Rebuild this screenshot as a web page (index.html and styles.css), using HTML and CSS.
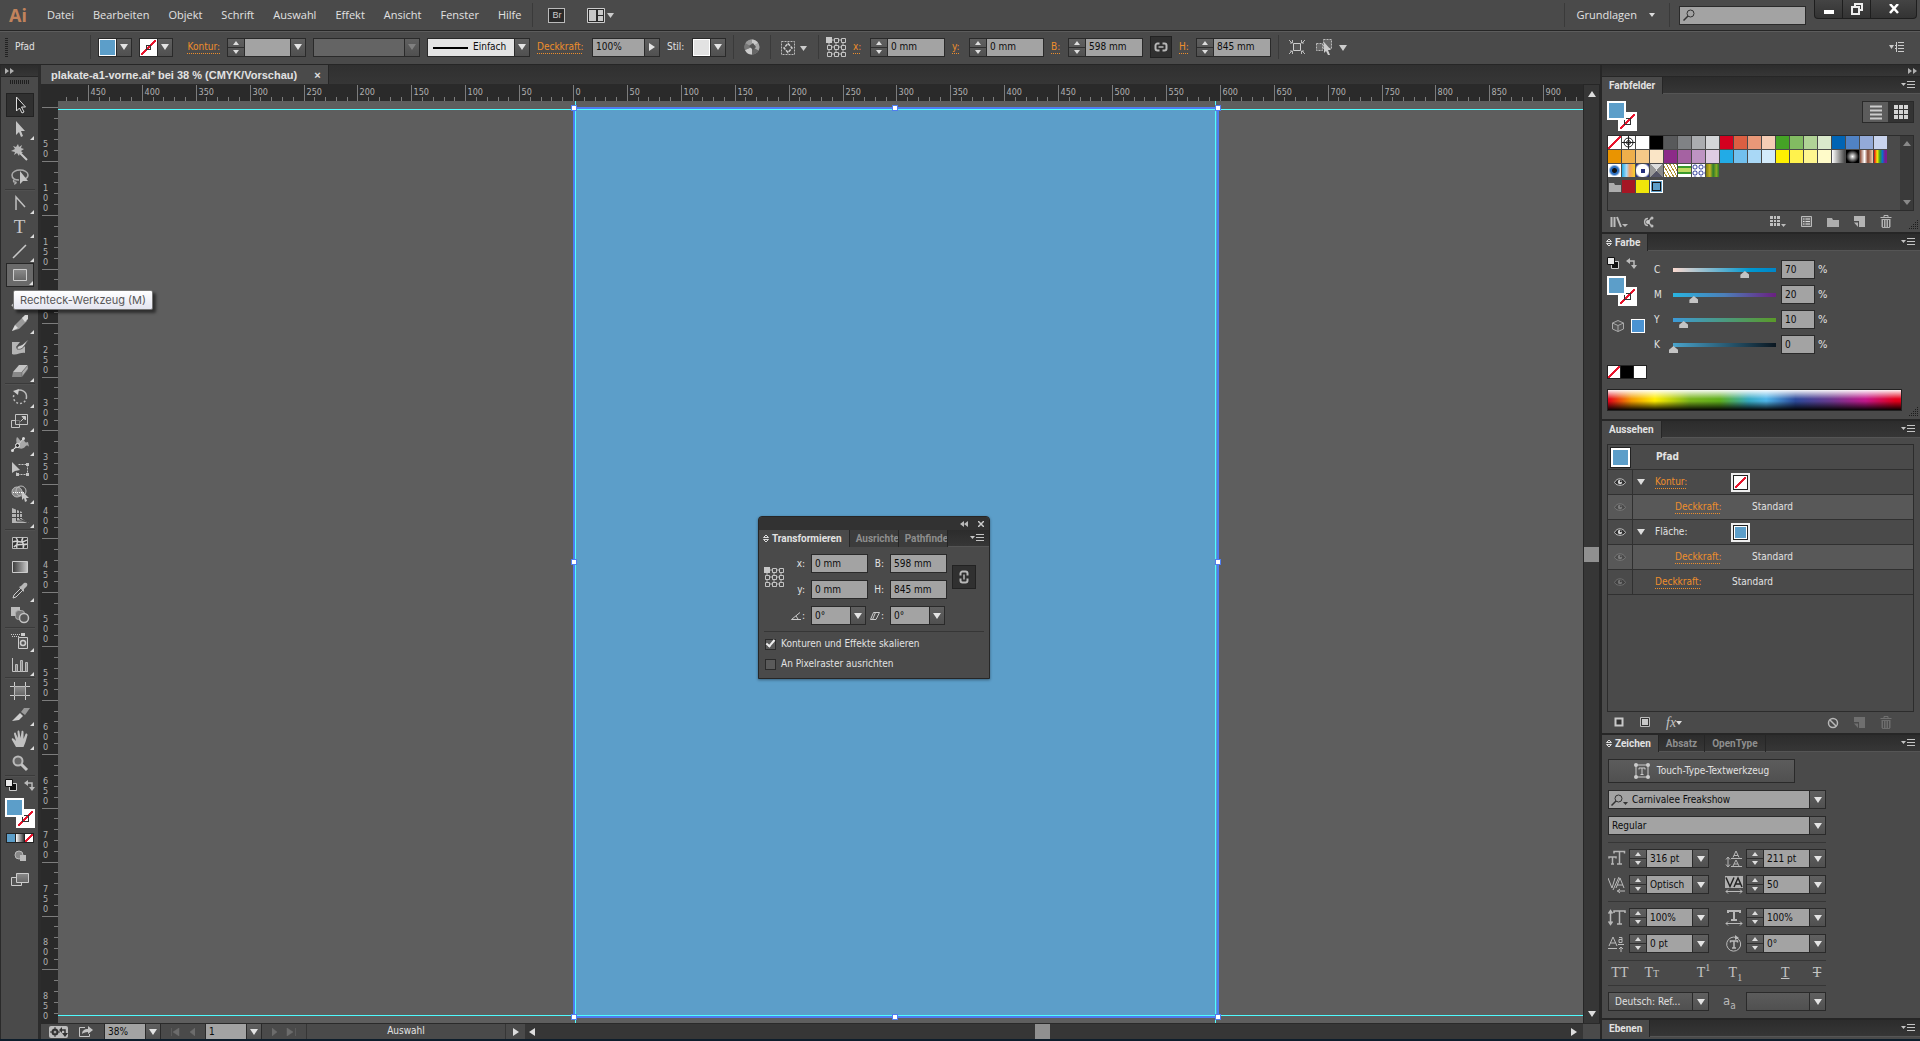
FILE: index.html
```html
<!DOCTYPE html>
<html lang="de">
<head>
<meta charset="utf-8">
<title>plakate-a1-vorne.ai – Illustrator</title>
<link rel="stylesheet" href="styles.css">
</head>
<body>
<svg class="defs" aria-hidden="true">
  <defs>
    <linearGradient id="metal" x1="0" y1="0" x2="0" y2="1"><stop offset="0" stop-color="#d6d6d6"/><stop offset="1" stop-color="#8e8e8e"/></linearGradient>
    <linearGradient id="fade"><stop offset="0" stop-color="#3a3a3a"/><stop offset="1" stop-color="#c8c8c8"/></linearGradient>
    <linearGradient id="dim" x1="0" y1="0" x2="0" y2="1"><stop offset="0" stop-color="#8a8a8a"/><stop offset="1" stop-color="#666"/></linearGradient>
    <symbol id="i-menu" viewBox="0 0 14 10"><path d="M0 3h5l-2.500 3z" fill="#c4c4c4"/><path d="M6 1.500h8M6 4.500h8M6 7.500h8" stroke="#c4c4c4"/></symbol>
    <symbol id="i-ref" viewBox="0 0 20 20"><path d="M3 3h14v14H3zM3 10h14M10 3v14" fill="none" stroke="#bbb"/><g fill="#4a4a4a" stroke="#c4c4c4"><path d="M8.500 1.500h4v4h-4zM15.500 1.500h4v4h-4zM1.500 8.500h4v4h-4zM8.500 8.500h4v4h-4zM15.500 8.500h4v4h-4zM1.500 15.500h4v4h-4zM8.500 15.500h4v4h-4zM15.500 15.500h4v4h-4z"/></g><path d="M0 0h6v6H0z" fill="#c8c8c8"/></symbol>
    <symbol id="i-link" viewBox="0 0 14 10"><path d="M5.500 1.500H3.500a2 2 0 0 0-2 2v3a2 2 0 0 0 2 2h2M8.500 1.500h2a2 2 0 0 1 2 2v3a2 2 0 0 1-2 2h-2" fill="none" stroke="#b8b8b8" stroke-width="2"/><path d="M4.500 5h5" stroke="#b8b8b8" stroke-width="1.500"/></symbol>
    <symbol id="i-eye" viewBox="0 0 12 8"><path d="M.5 4.500C2 1.500 4 .8 6 .8s4 .7 5.500 3.700C10 6.800 8 7.300 6 7.300S2 6.800.5 4.500z" fill="#2c2c2c" stroke="#c0c0c0"/><circle cx="6" cy="4" r="2.200" fill="#d8d8d8"/><circle cx="6.800" cy="3.300" r="1" fill="#222"/></symbol>
    <symbol id="i-default" viewBox="0 0 12 12"><path d="M4.500 4.500h7v7h-7z" fill="#111" stroke="#ccc"/><path d="M.5.5h7v7h-7z" fill="#e8e8e8" stroke="#111"/></symbol>
    <symbol id="i-swap" viewBox="0 0 11 11"><path d="M3 3h5v5" fill="none" stroke="#bbb" stroke-width="1.500"/><path d="M4 0v6L0 3zM5 7h6L8 11z" fill="#bbb"/></symbol>
    <symbol id="i-trash" viewBox="0 0 12 13"><path d="M.5 2.500h11M4 2V.5h4V2" fill="none" stroke="#b8b8b8"/><path d="M1.500 4h9v7.500l-1 1.500h-7l-1-1.500z" fill="#b0b0b0"/><path d="M3.500 5v7M6 5v7M8.500 5v7" stroke="#4a4a4a"/></symbol>
    <symbol id="i-new" viewBox="0 0 11 11"><path d="M0 0h11v11H5V5H0z" fill="#b4b4b4"/><path d="M0 6.500h4V11z" fill="#b4b4b4"/></symbol>
    <symbol id="i-folder" viewBox="0 0 12 10"><path d="M0 1h5l1 2h6v7H0z" fill="#adadad"/></symbol>
    <symbol id="i-grip" viewBox="0 0 10 10"><path d="M8 0h1v1H8zM6 2h1v1H6zM8 2h1v1H8zM4 4h1v1H4zM6 4h1v1H6zM8 4h1v1H8zM2 6h1v1H2zM4 6h1v1H4zM6 6h1v1H6zM8 6h1v1H8zM0 8h1v1H0zM2 8h1v1H2zM4 8h1v1H4zM6 8h1v1H6zM8 8h1v1H8z" fill="#1c1c1c"/></symbol>
    <symbol id="i-loupe" viewBox="0 0 12 12"><circle cx="7.500" cy="4.500" r="3.500" fill="none" stroke="#333"/><path d="M5 7L.5 11.500" stroke="#333" stroke-width="1.500"/></symbol>
    <symbol id="i-updown" viewBox="0 0 6 9"><path d="M.5 3.500L3 1l2.500 2.500zM.5 5.500L3 8l2.500-2.500z" fill="none" stroke="#ddd"/></symbol>
  </defs>
</svg>

<header class="menubar">
  <span class="logo">Ai</span>
  <nav class="menus">
    <a href="#">Datei</a><a href="#">Bearbeiten</a><a href="#">Objekt</a><a href="#">Schrift</a><a href="#">Auswahl</a><a href="#">Effekt</a><a href="#">Ansicht</a><a href="#">Fenster</a><a href="#">Hilfe</a>
  </nav>
  <i class="vsep"></i>
  <button class="bridge">Br</button>
  <button class="plain arrange" aria-label="Dokumente anordnen"><svg width="27" height="15"><path d="M.5.5h17v14H.5z" fill="#2a2a2a" stroke="#ccc"/><path d="M2 2h7v11H2zM11 2h5v5h-5zM11 8h5v5h-5z" fill="#c8c8c8"/><path d="M20 5h7l-3.500 5z" fill="#ccc"/></svg></button>
  <span class="spacer"></span>
  <i class="vsep"></i>
  <button class="plain workspace">Grundlagen <i class="tri small"></i></button>
  <i class="vsep"></i>
  <label class="search"><svg width="12" height="12"><use href="#i-loupe"/></svg><input type="search" aria-label="Suche"></label>
  <div class="winbtns">
    <button aria-label="Minimieren"><svg width="10" height="14"><path d="M0 8h10v4H0z" fill="#fff"/></svg></button><button aria-label="Wiederherstellen"><svg width="12" height="12"><path d="M4 1h7v6H8V4H4zM1 4h7v7H1z" fill="none" stroke="#eee" stroke-width="2"/></svg></button><button class="close" aria-label="Schließen"><svg width="10" height="10"><path d="M1 0l8 9M9 0L1 9" stroke="#fff" stroke-width="2.500"/></svg></button>
  </div>
</header>

<section class="controlbar">
  <i class="grip"></i>
  <span class="kind">Pfad</span>
  <i class="vsep"></i>
  <span class="chip"><i class="sw blue"></i><button class="arrow" aria-label="Fläche"></button></span>
  <span class="chip"><i class="sw none"></i><button class="arrow" aria-label="Konturfarbe"></button></span>
  <label class="hot w40" for="c-stroke">Kontur:</label>
  <span class="field w79"><span class="spin"><button aria-label="mehr"></button><button aria-label="weniger"></button></span><input id="c-stroke"><button class="arrow" aria-label="Konturstärke"></button></span>
  <span class="field disabled w107"><select aria-label="Breitenprofil" disabled></select><button class="arrow" disabled aria-label="Profil"></button></span>
  <span class="field brush w103"><select aria-label="Pinsel"><option>Einfach</option></select><button class="arrow" aria-label="Pinselliste"></button></span>
  <label class="hot w48" for="c-op">Deckkraft:</label>
  <span class="field w68"><input id="c-op" value="100%"><button class="arrow right" aria-label="Deckkraftregler"></button></span>
  <span class="w18">Stil:</span>
  <span class="chip"><i class="sw light"></i><button class="arrow" aria-label="Stil"></button></span>
  <i class="vsep"></i>
  <button class="plain w22" aria-label="Bildmaterial neu färben"><svg width="16" height="16"><circle cx="8" cy="8" r="7.500" fill="#8c8c8c"/><path d="M8 8L8 .5A7.500 7.500 0 0 1 14 4z" fill="#c8c8c8"/><path d="M8 8L14 4a7.500 7.500 0 0 1 .5 7.500z" fill="#a8a8a8"/><path d="M8 8l6.500 3.500A7.500 7.500 0 0 1 8 15.500z" fill="#666"/><path d="M8 8v7.500A7.500 7.500 0 0 1 1 11z" fill="#ccc"/><path d="M8 8L1 11a7.500 7.500 0 0 1 .5-7z" fill="#777"/><path d="M8 8L1.500 4A7.500 7.500 0 0 1 8 .5z" fill="#999"/><path d="M5 7l4-3 3 4-3 3z" fill="#555"/></svg></button>
  <i class="vsep"></i>
  <button class="plain w33" aria-label="Ausrichten"><svg width="27" height="15"><path d="M.5 1.500h13v13H.5z" fill="none" stroke="#bbb" stroke-dasharray="2 1"/><path d="M7 3.500L11 8l-4 4.500L3 8z" fill="none" stroke="#ccc" stroke-width="1.500" stroke-dasharray="3 1"/><path d="M19 6h7l-3.500 5z" fill="#ccc"/></svg></button>
  <i class="vsep"></i>
  <svg width="20" height="20"><use href="#i-ref"/></svg>
  <label class="hot" for="c-x">x:</label>
  <span class="field w75"><span class="spin"><button aria-label="mehr"></button><button aria-label="weniger"></button></span><input id="c-x" value="0 mm"></span>
  <label class="hot" for="c-y">y:</label>
  <span class="field w75"><span class="spin"><button aria-label="mehr"></button><button aria-label="weniger"></button></span><input id="c-y" value="0 mm"></span>
  <label class="hot" for="c-b">B:</label>
  <span class="field w75"><span class="spin"><button aria-label="mehr"></button><button aria-label="weniger"></button></span><input id="c-b" value="598 mm"></span>
  <button class="linkbtn wide" aria-label="Proportionen"><svg width="14" height="10"><use href="#i-link"/></svg></button>
  <label class="hot" for="c-h">H:</label>
  <span class="field w75"><span class="spin"><button aria-label="mehr"></button><button aria-label="weniger"></button></span><input id="c-h" value="845 mm"></span>
  <i class="vsep"></i>
  <button class="plain w22" aria-label="Form"><svg width="16" height="14"><path d="M4.500 3.500h7v7h-7z" fill="#555" stroke="#ccc"/><path d="M0 0l3 3M16 0l-3 3M0 14l3-3M16 14l-3-3M1 3h2.500V0M15 3h-2.500V0M1 11h2.500v3M15 11h-2.500v3" fill="none" stroke="#bbb"/></svg></button>
  <button class="plain w33" aria-label="Isolieren"><svg width="31" height="18"><path d="M.5 5.500h6v7h-6zM7.500 1.500h8v9h-8z" fill="#666" stroke="#bbb" stroke-dasharray="2 1"/><path d="M8 4l7 8h-3l2 5h-2l-2-4-2 2z" fill="#ccc"/><path d="M23 7h8l-4 6z" fill="#ccc"/></svg></button>
  <span class="spacer"></span>
  <button class="plain" aria-label="Menü"><svg width="15" height="12"><path d="M0 4h5l-2.500 4zM6 4h2v1H6zM6 7h2v1H6z" fill="#ccc"/><path d="M9 1.500h6M9 4.500h6M9 7.500h6M9 10.500h6M7.500 1v10" stroke="#ccc"/></svg></button>
</section>

<main class="work">
  <aside class="tools">
    <div class="collapse"><svg width="9" height="6"><path d="M0 0l4 3-4 3zM5 0l4 3-4 3z" fill="#b0b0b0"/></svg></div>
    <div class="toolgrip"><i></i></div>
    <div class="toolset">
      <button class="tool active" aria-label="Auswahl"><svg width="20" height="20"><path d="M6.500 2v14l3-3 2.500 5 2-1-2.500-5h4z" fill="#222" stroke="#ddd"/></svg></button>
      <button class="tool more" aria-label="Direktauswahl"><svg width="20" height="20"><path d="M6 2v14l3-3 2 5 2-1-2-5h4z" fill="#c4c4c4"/></svg></button>
      <button class="tool" aria-label="Zauberstab"><svg width="20" height="20"><path d="M8 1l1 3 3-2-1 3 3 1-3 2 2 2-3 0-1 3-2-3-3 2 1-3-4-1 4-2-2-3 3 1z" fill="#b8b8b8"/><path d="M10 10l7 7" stroke="#c8c8c8" stroke-width="2"/></svg></button>
      <button class="tool" aria-label="Lasso"><svg width="20" height="20"><path d="M9 13c-5 0-7-2-7-5 0-3 4-5 8-5s8 2 8 5c0 2-1 3-3 4M5 12c-2 1-2 3 0 3s1 2-1 2" fill="none" stroke="#aaa" stroke-width="1.500"/><path d="M10 4v13l3-3 5 0z" fill="#c4c4c4"/></svg></button>
      <hr>
      <button class="tool more" aria-label="Ankerpunkt"><svg width="20" height="20"><path d="M6 17V4l9 10" fill="none" stroke="#c0c0c0" stroke-width="1.500"/></svg></button>
      <button class="tool more type" aria-label="Text">T</button>
      <button class="tool more" aria-label="Liniensegment"><svg width="20" height="20"><path d="M3 17L16 4" stroke="#c8c8c8" stroke-width="1.500"/></svg></button>
      <button class="tool more hover" aria-label="Rechteck-Werkzeug"><svg width="20" height="20"><path d="M3.500 4.500h13v11h-13z" fill="url(#dim)" stroke="#ccc"/></svg></button>
      <button class="tool more" aria-label="Pinsel"><svg width="20" height="20"><path d="M2 17l5-5L16 4" stroke="#bbb" stroke-width="2"/></svg></button>
      <button class="tool more" aria-label="Buntstift"><svg width="20" height="20"><path d="M2 18l3-6 8-8 4 4-8 8z" fill="#999"/><path d="M12 5l3-3 3 0 0 4-3 3z" fill="#d8d8d8"/><path d="M2 18l3-6 3 3z" fill="#ddd"/></svg></button>
      <button class="tool" aria-label="Tropfenpinsel"><svg width="20" height="20"><path d="M2 5h8L6 10c3 4 7 1 9-1v7c-4-1-9 3-13 1z" fill="#b4b4b4"/><path d="M7 12c0-4 4-3 6-5l6-5-4 6c-2 3-4 5-8 4z" fill="#d0d0d0" stroke="#444" stroke-width=".7"/></svg></button>
      <button class="tool more" aria-label="Radiergummi"><svg width="20" height="20"><path d="M3 11L9 4h9l-6 7z" fill="#c4c4c4"/><path d="M3 11h9v5H2z" fill="#888"/><path d="M12 11l6-7v4l-6 8z" fill="#aaa" stroke="#555" stroke-width=".5"/></svg></button>
      <hr>
      <button class="tool more" aria-label="Drehen"><svg width="20" height="20"><path d="M6 4.500a6.500 6.500 0 0 1 10.500 5.500" fill="none" stroke="#bbb" stroke-width="1.500"/><path d="M16.500 10a6.500 6.500 0 1 1-12-3.500" fill="none" stroke="#bbb" stroke-width="1.500" stroke-dasharray="2 2"/><path d="M3 4l6-2-1 6z" fill="#ccc"/></svg></button>
      <button class="tool more" aria-label="Skalieren"><svg width="20" height="20"><path d="M1.500 9.500h8v7h-8z" fill="none" stroke="#c4c4c4"/><path d="M5.500 3.500h12v10h-12z" fill="#4a4a4a" fill-opacity=".6" stroke="#c4c4c4"/><path d="M10.500 10.500L14 7M12 5.500h3.500V9z" fill="#ccc" stroke="#ccc"/></svg></button>
      <button class="tool more" aria-label="Breite"><svg width="20" height="20"><path d="M7 10c-1-4-1-6 0-8 2 1 2 3 4 4 1-1 2-2 3-1 1 2 1 3 4 2l1 5c-1-2-3-2-4 0-3 3-6 1-8 1-2 0-3 2-5 2z" fill="#a8a8a8"/><path d="M2.500 15.500l5-5 6-7" stroke="#ddd"/><circle cx="2.500" cy="15.500" r="1.500" fill="#ddd"/><circle cx="7.500" cy="10.500" r="2" fill="#333" stroke="#eee"/><circle cx="13.500" cy="3.500" r="1.500" fill="#ddd"/></svg></button>
      <button class="tool" aria-label="Frei transformieren"><svg width="20" height="20"><path d="M2 3v11l3-2 5-1z" fill="#c4c4c4"/><path d="M8.500 5.500h9v10h-11v-3" fill="none" stroke="#c4c4c4" stroke-dasharray="2 1"/><path d="M16 4h3v3h-3zM16 14h3v3h-3zM6 14h3v3H6z" fill="#c4c4c4"/></svg></button>
      <button class="tool more" aria-label="Formerstellung"><svg width="20" height="20"><circle cx="7" cy="9" r="5" fill="#888" stroke="#bbb"/><circle cx="11" cy="8" r="5" fill="none" stroke="#bbb"/><path d="M3 9.500h11" stroke="#fff" stroke-dasharray="1 1"/><path d="M12 8v9l2-2 1 4 2-1-1-3h3z" fill="#c8c8c8"/></svg></button>
      <button class="tool more" aria-label="Perspektivenraster"><svg width="20" height="20"><path d="M2 1l10 4v7l7 4H2z" fill="#b4b4b4"/><path d="M6.500 2v12H19M9.500 3v9l9 4M2 6.500h10M2 10.500h10" fill="none" stroke="#444"/></svg></button>
      <hr>
      <button class="tool" aria-label="Gitter"><svg width="20" height="20"><path d="M2.500 4.500h15v11h-15z" fill="#333" stroke="#bbb"/><path d="M3 9c4-3 7 3 14-2M4 14c3-5 9-1 13-3M6 5c4 3-1 7 1 10M13 5c-4 4 3 5 0 10" fill="none" stroke="#d4d4d4" stroke-width="1.500"/></svg></button>
      <button class="tool" aria-label="Verlauf"><svg width="20" height="20"><path d="M2.500 4.500h15v11h-15z" fill="url(#fade)" stroke="#ccc"/></svg></button>
      <button class="tool more" aria-label="Pipette"><svg width="20" height="20"><path d="M3 17l1-3 7-7 2 2-7 7z" fill="#444" stroke="#ccc"/><path d="M9 6l2-1 3-3c3-1 4 1 3 3l-3 3 0 3z" fill="#b8b8b8"/></svg></button>
      <button class="tool" aria-label="Angleichen"><svg width="20" height="20"><path d="M1 2h9v9H1z" fill="#bbb"/><rect x="5.500" y="5.500" width="9" height="9" rx="3" fill="#777" stroke="#aaa"/><circle cx="14" cy="13" r="4.500" fill="#555" stroke="#c4c4c4" stroke-width="1.500"/></svg></button>
      <hr>
      <button class="tool more" aria-label="Symbol aufsprühen"><svg width="20" height="20"><path d="M1 3.500h9M2 5.500h8" stroke="#ccc" stroke-dasharray="1 1"/><path d="M11 2h4v3h-4z" fill="#ccc"/><path d="M8.500 6.500h9v11h-9z" fill="#555" stroke="#ccc"/><circle cx="13" cy="12" r="2.500" fill="none" stroke="#ccc" stroke-width="1.500"/></svg></button>
      <button class="tool more" aria-label="Diagramm"><svg width="20" height="20"><path d="M2.500 3v13.500H18" fill="none" stroke="#c4c4c4"/><path d="M5.500 9.500h2v7h-2zM10.500 5.500h2v11h-2zM15.500 7.500h2v9h-2z" fill="#888" stroke="#bbb"/></svg></button>
      <hr>
      <button class="tool" aria-label="Zeichenfläche"><svg width="20" height="20"><path d="M4.500 5.500h11v9h-11z" fill="url(#dim)" stroke="#bbb"/><path d="M4.500 1v4M15.500 1v4M4.500 15v4M15.500 15v4M0 5.500h4M16 5.500h4M0 14.500h4M16 14.500h4" stroke="#ccc"/></svg></button>
      <button class="tool more" aria-label="Slice"><svg width="20" height="20"><path d="M2 16l8-8 3 3-4 4z" fill="#d0d0d0"/><path d="M11 7l3-4h6l-5 7z" fill="#999"/></svg></button>
      <button class="tool more" aria-label="Hand"><svg width="20" height="20"><path d="M6 18l-4-7c-1-2 1-2 2-1l2 2-2-7c0-2 2-2 2 0l2 4-.5-6c0-2 2-2 2 0l1 6 1-6c0-2 2-1 2 0l0 7 2-5c1-1 2 0 2 1l-2 7-2 5z" fill="#c0c0c0"/></svg></button>
      <button class="tool" aria-label="Zoom"><svg width="20" height="20"><circle cx="8" cy="8" r="4.500" fill="#666" stroke="#b8b8b8" stroke-width="2"/><path d="M11.500 11.500L17 17" stroke="#c4c4c4" stroke-width="3"/></svg></button>
      <hr>
    </div>
    <div class="minirow"><svg width="12" height="12"><use href="#i-default"/></svg><svg width="11" height="11"><use href="#i-swap"/></svg></div>
    <div class="fillstroke"><i class="sw none big"></i><i class="sw blue big"></i></div>
    <div class="modes"><i class="blue"></i><i class="grad"></i><i class="none"></i></div>
    <div class="tool"><svg width="20" height="20"><circle cx="9" cy="9" r="4" fill="#888" stroke="#bbb"/><path d="M10 9h6v6h-6z" fill="#bbb"/></svg></div>
    <div class="tool"><svg width="20" height="20"><path d="M1.500 7.500h10v8h-10z" fill="#555" stroke="#ccc"/><path d="M6.500 3.500h12v9h-12z" fill="url(#dim)" stroke="#ccc"/></svg></div>
  </aside>

  <section class="doc">
    <div class="doctabs"><div class="doctab"><span>plakate-a1-vorne.ai* bei 38 % (CMYK/Vorschau)</span><button class="plain" aria-label="Schließen">×</button></div></div>
    <div class="stage">
      <svg class="rule-x" id="rule-x" aria-hidden="true"></svg>
      <svg class="rule-y" id="rule-y" aria-hidden="true"></svg>
      <div class="canvas">
        <div class="artboard">
          <i class="h tl"></i><i class="h tc"></i><i class="h tr"></i><i class="h ml"></i><i class="h mr"></i><i class="h bl"></i><i class="h bc"></i><i class="h br"></i>
        </div>
        <i class="guide gx1"></i><i class="guide gx2"></i><i class="guide gy1"></i><i class="guide gy2"></i>
        <section class="transform">
          <div class="thead"><svg width="8" height="6"><path d="M4 0L0 3l4 3zM8 0L4 3l4 3z" fill="#bbb"/></svg><svg width="6" height="6"><path d="M0 0l6 6M6 0L0 6" stroke="#ccc" stroke-width="1.500"/></svg></div>
          <div class="tabs"><button class="tab on"><svg width="6" height="9"><use href="#i-updown"/></svg>Transformieren</button><button class="tab clip">Ausrichten</button><button class="tab clip">Pathfinder</button><span class="spacer"></span><svg width="14" height="10"><use href="#i-menu"/></svg></div>
          <div class="tbody">
            <div class="tgrid">
              <svg class="tref" width="20" height="20"><use href="#i-ref"/></svg>
              <label for="t-x">x:</label><span class="field"><input id="t-x" value="0 mm"></span>
              <label for="t-b">B:</label><span class="field"><input id="t-b" value="598 mm"></span>
              <label for="t-y">y:</label><span class="field"><input id="t-y" value="0 mm"></span>
              <label for="t-h">H:</label><span class="field"><input id="t-h" value="845 mm"></span>
              <label class="rot" for="t-w" aria-label="Drehen"><svg width="10" height="8"><path d="M9 .5L.5 7.500H10M5 4l2 3" fill="none" stroke="#ccc"/></svg>:</label><span class="field angle"><input id="t-w" value="0°"><button class="arrow" aria-label="Winkel"></button></span>
              <label for="t-s" aria-label="Verbiegen"><svg width="10" height="8"><path d="M3.500.5h6L6 7.500H.5zM5.500.5L2.500 7.500" fill="none" stroke="#ccc"/></svg>:</label><span class="field angle"><input id="t-s" value="0°"><button class="arrow" aria-label="Winkel"></button></span>
              <button class="linkbtn tlink" aria-label="Proportionen"><svg width="10" height="14"><path d="M1.500 5.500V3.500a2 2 0 0 1 2-2h3a2 2 0 0 1 2 2v2M1.500 8.500v2a2 2 0 0 0 2 2h3a2 2 0 0 0 2-2v-2" fill="none" stroke="#b8b8b8" stroke-width="2"/><path d="M5 4.500v5" stroke="#b8b8b8" stroke-width="1.500"/></svg></button>
            </div>
            <hr>
            <label class="check"><input type="checkbox" checked>Konturen und Effekte skalieren</label>
            <label class="check"><input type="checkbox">An Pixelraster ausrichten</label>
          </div>
        </section>
      </div>
      <div class="vscroll"><i class="up"></i><i class="thumb"></i><i class="down"></i></div>
    </div>
    <footer class="status">
      <button class="plain" aria-label="Voreinstellungen"><svg width="19" height="12"><rect width="19" height="12" rx="2" fill="#bdbdbd"/><circle cx="6" cy="6" r="2.500" fill="none" stroke="#333" stroke-width="2" /><path d="M6 1v10M1 6h10" stroke="#333"/><circle cx="6" cy="6" r="1" fill="#bdbdbd"/><path d="M12 4h4v4" fill="none" stroke="#333" stroke-width="1.500"/><path d="M13 1v6l-3-3zM13 7h6l-3 4z" fill="#333"/></svg></button>
      <button class="plain" aria-label="Teilen"><svg width="14" height="12"><path d="M6 1.500H.5v9h10V8" fill="none" stroke="#c4c4c4"/><path d="M3 8c0-3 2-5 6-5V0l5 4-5 4V6C6 6 4 7 3 8z" fill="#c4c4c4"/></svg></button>
      <span class="field w57"><input aria-label="Zoom" value="38%"><button class="arrow" aria-label="Zoomliste"></button></span>
      <span class="nav"><svg width="24" height="8"><path d="M.5 0v8M8 0v8L2 4zM24 0v8l-5-4z" fill="#6c6c6c" stroke="#6c6c6c" stroke-width=".5"/></svg></span>
      <span class="field w57"><input aria-label="Zeichenfläche" value="1"><button class="arrow" aria-label="Zeichenflächen"></button></span>
      <span class="nav"><svg width="24" height="8"><path d="M0 0v8l5-4zM15 0v8l6-4zM23.500 0v8" fill="#6c6c6c" stroke="#6c6c6c" stroke-width=".5"/></svg></span>
      <span class="tooltext">Auswahl</span>
      <button class="plain go" aria-label="Anzeige"><i class="triR"></i></button>
      <div class="hscroll"><i class="left"></i><span class="before"></span><i class="thumb"></i><span class="after"></span><i class="rightEnd"></i></div>
      <i class="corner"></i>
    </footer>
  </section>

  <aside class="dock">
    <div class="collapse end"><svg width="9" height="6"><path d="M0 0l4 3-4 3zM5 0l4 3-4 3z" fill="#b0b0b0"/></svg></div>

    <section class="panel">
      <div class="tabs"><button class="tab on">Farbfelder</button><span class="spacer"></span><svg width="14" height="10"><use href="#i-menu"/></svg></div>
      <div class="swbody">
        <div class="swtop">
          <div class="fillstroke"><i class="sw none big"></i><i class="sw blue big"></i></div>
          <div class="views"><button aria-label="Liste"><svg width="12" height="15"><path d="M0 1.500h12M0 5.500h12M0 9.500h12M0 13.500h12" stroke="#ccc" stroke-width="2"/></svg></button><button class="sel" aria-label="Raster"><svg width="14" height="14"><path d="M0 0h4v4H0zM5 0h4v4H5zM10 0h4v4h-4zM0 5h4v4H0zM5 5h4v4H5zM10 5h4v4h-4zM0 10h4v4H0zM5 10h4v4H5zM10 10h4v4h-4z" fill="#d4d4d4"/></svg></button></div>
        </div>
        <div class="swlist"><div class="swscroll"><div class="swgrid" id="swatches"></div>
          <div class="swgrid group"><i class="cell fold"><svg width="12" height="10"><use href="#i-folder"/></svg></i><i class="cell" style="background:#a51624"></i><i class="cell" style="background:#f0e60a"></i><i class="cell chosen"></i></div></div>
          <div class="mini-scroll"><i></i><i class="dn"></i></div>
        </div>
        <div class="foot">
          <button class="plain" aria-label="Bibliothek"><svg width="18" height="12"><path d="M1.500 1v10M4.500 1v10M7 1l4 10" stroke="#bbb" stroke-width="2"/><path d="M12 8h6l-3 3z" fill="#bbb"/></svg></button>
          <button class="plain" aria-label="Kuler"><svg width="11" height="12"><path d="M9 1.500L5 6l4 4.500M5 2.500C.5 2.500.5 9.500 5 9.500" fill="none" stroke="#bbb" stroke-width="1.500"/><circle cx="9" cy="2" r="1.500" fill="#bbb"/><circle cx="9" cy="10" r="1.500" fill="#bbb"/><circle cx="5" cy="6" r="2" fill="#ccc"/></svg></button>
          <span class="spacer"></span>
          <button class="plain" aria-label="Art"><svg width="16" height="12"><path d="M0 0h10v10H0z" fill="#c0c0c0"/><path d="M0 3.500h10M0 6.500h10M3.500 0v10M6.500 0v10" stroke="#4a4a4a"/><path d="M11 8h5l-2.500 3z" fill="#bbb"/></svg></button>
          <button class="plain" aria-label="Optionen"><svg width="11" height="11"><path d="M.5.5h10v10H.5z" fill="#666" stroke="#bbb"/><path d="M2 3h1.500M2 5.500h1.500M2 8h1.500M4.500 3H9M4.500 5.500H9M4.500 8H9" stroke="#ddd"/></svg></button>
          <button class="plain" aria-label="Gruppe"><svg width="12" height="10"><use href="#i-folder"/></svg></button>
          <button class="plain" aria-label="Neu"><svg width="11" height="11"><use href="#i-new"/></svg></button>
          <button class="plain" aria-label="Löschen"><svg width="12" height="13"><use href="#i-trash"/></svg></button>
          <span class="footend"></span>
        </div>
        <svg class="pgrip" width="10" height="10"><use href="#i-grip"/></svg>
      </div>
    </section>

    <section class="panel">
      <div class="tabs"><button class="tab on"><svg width="6" height="9"><use href="#i-updown"/></svg>Farbe</button><span class="spacer"></span><svg width="14" height="10"><use href="#i-menu"/></svg></div>
      <div class="colbody">
        <div class="colgrid">
          <div class="colleft">
            <div class="minirow"><svg width="12" height="12"><use href="#i-default"/></svg><svg width="11" height="11"><use href="#i-swap"/></svg></div>
            <div class="fillstroke"><i class="sw none big"></i><i class="sw blue big"></i></div>
            <div class="minirow cube"><svg width="12" height="12"><path d="M6 .5L11.500 3v6L6 11.500.5 9V3zM.5 3L6 5.500 11.500 3M6 5.500v6" fill="#555" stroke="#aaa"/></svg><i class="gamut"></i></div>
          </div>
          <div class="sliders" id="sliders"></div>
        </div>
        <div class="three"><i class="none"></i><i class="blk"></i><i class="wht"></i></div>
        <div class="spectrum"></div>
        <svg class="pgrip" width="10" height="10"><use href="#i-grip"/></svg>
      </div>
    </section>

    <section class="panel">
      <div class="tabs"><button class="tab on">Aussehen</button><span class="spacer"></span><svg width="14" height="10"><use href="#i-menu"/></svg></div>
      <div class="apbody">
        <div class="aplist">
          <div class="aprow head"><i class="sw blue mid"></i><b>Pfad</b></div>
          <div class="aprow"><span class="eye"><svg width="12" height="8"><use href="#i-eye"/></svg></span><i class="tri"></i><a class="hot c1" href="#">Kontur:</a><i class="sw none framed"></i></div>
          <div class="aprow sub"><span class="eye dim"><svg width="12" height="8"><use href="#i-eye"/></svg></span><a class="hot c2" href="#">Deckkraft:</a><span>Standard</span></div>
          <div class="aprow"><span class="eye"><svg width="12" height="8"><use href="#i-eye"/></svg></span><i class="tri"></i><span class="c1">Fläche:</span><i class="sw blue framed"></i></div>
          <div class="aprow sub"><span class="eye dim"><svg width="12" height="8"><use href="#i-eye"/></svg></span><a class="hot c2" href="#">Deckkraft:</a><span>Standard</span></div>
          <div class="aprow"><span class="eye dim"><svg width="12" height="8"><use href="#i-eye"/></svg></span><a class="hot c3" href="#">Deckkraft:</a><span>Standard</span></div>
        </div>
        <div class="foot">
          <button class="plain" aria-label="Neue Kontur"><svg width="11" height="11"><path d="M1.500 1.500h7v7h-7z" fill="#333" stroke="#c8c8c8" stroke-width="2"/></svg></button>
          <button class="plain" aria-label="Neue Fläche"><svg width="11" height="11"><path d="M.5.5h9v9h-9z" fill="#333" stroke="#bbb"/><path d="M2 2h6v6H2z" fill="#c8c8c8"/></svg></button>
          <button class="plain fx">fx<i class="tri small"></i></button>
          <span class="spacer"></span>
          <button class="plain" aria-label="Löschen"><svg width="12" height="12"><circle cx="6" cy="6" r="4.500" fill="none" stroke="#b8b8b8" stroke-width="1.500"/><path d="M3 3l6 6" stroke="#b8b8b8" stroke-width="1.500"/></svg></button>
          <button class="plain dim" aria-label="Neu"><svg width="11" height="11"><use href="#i-new"/></svg></button>
          <button class="plain dim" aria-label="Entfernen"><svg width="12" height="13"><use href="#i-trash"/></svg></button>
          <span class="footend"></span>
        </div>
      </div>
    </section>

    <section class="panel">
      <div class="tabs"><button class="tab on"><svg width="6" height="9"><use href="#i-updown"/></svg>Zeichen</button><button class="tab">Absatz</button><button class="tab">OpenType</button><span class="spacer"></span><svg width="14" height="10"><use href="#i-menu"/></svg></div>
      <div class="chbody">
        <button class="touch"><svg width="16" height="16"><path d="M2 2h12v12H2z" fill="none" stroke="#ccc"/><g fill="#ccc"><circle cx="2" cy="2" r="2"/><circle cx="14" cy="2" r="2"/><circle cx="2" cy="14" r="2"/><circle cx="14" cy="14" r="2"/></g><path d="M5 6.500V5h6v1.500M8 5v6M6.500 11.500h3" fill="none" stroke="#ccc"/></svg>Touch-Type-Textwerkzeug</button>
        <span class="field font"><svg width="18" height="12"><use href="#i-loupe" width="12" height="12"/><path d="M12 8h5l-2.500 3z" fill="#333"/></svg><select aria-label="Schriftfamilie"><option>Carnivalee Freakshow</option></select><button class="arrow" aria-label="Schriften"></button></span>
        <span class="field"><select aria-label="Schriftschnitt"><option>Regular</option></select><button class="arrow" aria-label="Schnitte"></button></span>
        <hr>
        <div class="chrow">
          <svg width="18" height="18"><path d="M6 3.500V1.500h10.500v2M11.500 1.500v12M9 14h5M1 8.500V7h7v1.500M4.500 7v7M3 14h3" fill="none" stroke="#b4b4b4" stroke-width="1.500"/></svg>
          <span class="field"><span class="spin"><button aria-label="mehr"></button><button aria-label="weniger"></button></span><input aria-label="Schriftgrad" value="316 pt"><button class="arrow" aria-label="Grade"></button></span>
          <svg width="18" height="18"><path d="M8 7.500l3-6.500 3 6.500M9 5.500h4M8 16l3-6 3 6M9 14h4M6 8.500h11M6 16.500h11M3 8v8M1 9.500L3 7l2 2.500M1 14.500L3 17l2-2.500" fill="none" stroke="#b8b8b8"/></svg>
          <span class="field"><span class="spin"><button aria-label="mehr"></button><button aria-label="weniger"></button></span><input aria-label="Zeilenabstand" value="211 pt"><button class="arrow" aria-label="Abstände"></button></span>
        </div>
        <div class="chrow">
          <svg width="18" height="18"><path d="M0 2l4 10L7 2M8 12l4-10 4 10M9 9h6M5 14L11 1M9 15h8M12 13l-2.500 2 2.500 2" fill="none" stroke="#bbb"/></svg>
          <span class="field"><span class="spin"><button aria-label="mehr"></button><button aria-label="weniger"></button></span><input aria-label="Kerning" value="Optisch"><button class="arrow" aria-label="Kerning"></button></span>
          <svg width="18" height="18"><path d="M0 0h18v12H0z" fill="#b0b0b0"/><path d="M1 1.500l4 9 4-9M9 11l4-9 4 9M10.500 8h5" fill="none" stroke="#222" stroke-width="1.500"/><path d="M1 15.500h16M3 13.500l-2 2 2 2M15 13.500l2 2-2 2" fill="none" stroke="#bbb"/></svg>
          <span class="field"><span class="spin"><button aria-label="mehr"></button><button aria-label="weniger"></button></span><input aria-label="Laufweite" value="50"><button class="arrow" aria-label="Laufweiten"></button></span>
        </div>
        <hr>
        <div class="chrow">
          <svg width="18" height="18"><path d="M6 4V2h11v2M11.500 2v13M9 15h5M2.500 2v13M.5 4.500l2-3 2 3M.5 12.500l2 3 2-3" fill="none" stroke="#b8b8b8" stroke-width="1.500"/></svg>
          <span class="field"><span class="spin"><button aria-label="mehr"></button><button aria-label="weniger"></button></span><input aria-label="Vertikal skalieren" value="100%"><button class="arrow" aria-label="Werte"></button></span>
          <svg width="18" height="18"><path d="M3 4V2h12v2M9 2v9M6 11h6" fill="none" stroke="#b8b8b8" stroke-width="2"/><path d="M1 14.500h16M3 12.500l-2 2 2 2M15 12.500l2 2-2 2" fill="none" stroke="#bbb"/></svg>
          <span class="field"><span class="spin"><button aria-label="mehr"></button><button aria-label="weniger"></button></span><input aria-label="Horizontal skalieren" value="100%"><button class="arrow" aria-label="Werte"></button></span>
        </div>
        <div class="chrow">
          <svg width="18" height="18"><path d="M1 11L5 2l4 9M2.500 8h5M0 13.500h9M11 2.500h3v5h-3v-3h3M10 9.500h6M13 17v-5M11 14l2-2 2 2" fill="none" stroke="#bbb"/></svg>
          <span class="field"><span class="spin"><button aria-label="mehr"></button><button aria-label="weniger"></button></span><input aria-label="Grundlinienversatz" value="0 pt"><button class="arrow" aria-label="Werte"></button></span>
          <svg width="18" height="18"><path d="M12 3a7 7 0 1 1-6-.3" fill="none" stroke="#bbb"/><path d="M6 2.700a7 7 0 0 1 5-.3" fill="none" stroke="#bbb"/><path d="M10 0l4 3-4 2z" fill="#bbb"/><path d="M5.500 7.500V6h7v1.500M9 6v7M7 13h4" fill="none" stroke="#bbb" stroke-width="1.500"/></svg>
          <span class="field"><span class="spin"><button aria-label="mehr"></button><button aria-label="weniger"></button></span><input aria-label="Zeichendrehung" value="0°"><button class="arrow" aria-label="Werte"></button></span>
        </div>
        <hr>
        <div class="styles"><button>TT</button><button>T<small>T</small></button><button>T<sup>1</sup></button><button>T<sub>1</sub></button><button class="u">T</button><button class="s">T</button></div>
        <hr>
        <div class="chlast"><span class="field dark"><select aria-label="Sprache"><option>Deutsch: Ref...</option></select><button class="arrow" aria-label="Sprachen"></button></span><span class="aa">a<sub>a</sub></span><span class="field dark"><select aria-label="Glätten"></select><button class="arrow" aria-label="Glättung"></button></span></div>
      </div>
    </section>

    <section class="panel last">
      <div class="tabs"><button class="tab on">Ebenen</button><span class="spacer"></span><svg width="14" height="10"><use href="#i-menu"/></svg></div>
    </section>
  </aside>
</main>
<div class="tooltip" role="tooltip">Rechteck-Werkzeug (M)</div>
<script src="app.js"></script>
</body>
</html>
```
FILE: styles.css
```css
* { box-sizing: border-box; }
html, body { height: 100%; }
body { margin: 0; display: flex; flex-direction: column; background: #4a4a4a; color: #e2e2e2; font: 10px/14px "DejaVu Sans Condensed", "Liberation Sans", sans-serif; overflow: hidden; border-bottom: 2px solid #0d1d2b; }
button, input, select { font: inherit; color: inherit; margin: 0; padding: 0; border: 0; background: none; border-radius: 0; outline: 0; }
svg { flex: none; display: block; }
hr { border: 0; margin: 0; height: 1px; background: #363636; }
i { display: block; flex: none; }
a { color: inherit; text-decoration: none; }
.defs { position: absolute; width: 0; height: 0; }
.spacer { flex: 1; }
.plain { display: flex; align-items: center; justify-content: center; }
.vsep { width: 1px; height: 24px; background: #3a3a3a; }
.tri { border: 4px solid transparent; border-top: 6px solid #ddd; border-bottom: 0; width: 0; }
.tri.small { border-width: 4px 3px 0; }

/* menu bar */
.menubar { flex: none; height: 31px; display: flex; align-items: center; border-bottom: 1px solid #262626; font: 11px/16px "Open Sans", "Noto Sans", sans-serif; }
.logo { width: 47px; padding-left: 9px; color: #c1835c; font: bold 18px/24px "Noto Sans", sans-serif; }
.menus { display: flex; gap: 19px; margin-right: 11px; }
.bridge { width: 17px; height: 15px; margin-left: 15px; border: 1px solid #bbb; background: #2a2a2a; color: #ccc; font: 9px/12px "Liberation Sans", sans-serif; }
.arrange { margin-left: 22px; }
.workspace { gap: 12px; padding: 0 14px 0 12px; }
.search { display: flex; align-items: center; width: 127px; height: 19px; margin-left: 9px; padding-left: 3px; background: #a3a3a3; border: 1px solid #2a2a2a; }
.search input { width: 100%; min-width: 0; color: #111; }
.winbtns { display: flex; align-self: flex-start; margin: 0 3px 0 8px; border: 1px solid #1e1e1e; border-top: 0; border-radius: 0 0 4px 4px; background: linear-gradient(#444, #333); }
.winbtns button { width: 28px; height: 18px; display: grid; place-items: center; border-right: 1px solid #1e1e1e; }
.winbtns .close { width: 45px; height: 18px; border: 0; }

/* control bar */
.controlbar { flex: none; height: 34px; display: flex; align-items: center; gap: 7px; padding: 0 16px 2px 5px; border-top: 1px solid #5c5c5c; border-bottom: 1px solid #262626; }
.grip { width: 3px; height: 19px; background: repeating-linear-gradient(#222 0 1px, #4a4a4a 1px 2px); }
.kind { width: 68px; }
.w18 { width: 18px; } .w22 { width: 22px; } .w33 { width: 33px; } .w40 { width: 40px; } .w48 { width: 48px; white-space: nowrap; }
.w57 { width: 57px; } .w68 { width: 68px; } .w75 { width: 75px; } .w79 { width: 79px; } .w103 { width: 103px; } .w107 { width: 107px; }
.controlbar > * { flex: none; }
.controlbar > .spacer { flex: 1; }
.hot { color: #ee8e2c; text-decoration: underline dotted; text-underline-offset: 3px; min-width: 10px; white-space: nowrap; }
.w40.hot { text-align: right; }
.chip { display: flex; width: 34px; height: 19px; border: 1px solid #2a2a2a; }
.sw { position: relative; border: 1px solid #fff; }
.chip .sw { flex: 1; }
.blue { background: #5c9ec9; }
.light { background: #e2e2e2; }
.none { background: linear-gradient(to bottom right, transparent calc(50% - 1px), #e8142c calc(50% - 1px) calc(50% + 1px), transparent calc(50% + 1px)), #fff; }
.arrow { flex: none; width: 15px; border-left: 1px solid #2a2a2a; background: linear-gradient(#606060, #505050); display: grid; place-items: center; }
.arrow::before { content: ""; border: 4px solid transparent; border-top: 6px solid #e4e4e4; border-bottom: 0; }
.arrow.right::before { border: 4px solid transparent; border-left: 6px solid #e4e4e4; border-right: 0; }
.arrow:disabled::before { border-top-color: #808080; }
.field { display: flex; height: 19px; border: 1px solid #2a2a2a; background: #a3a3a3; color: #0c0c0c; min-width: 0; }
.field input, .field select { flex: 1; width: 0; min-width: 0; padding-left: 3px; appearance: none; }
.field select:disabled { opacity: 1; }
.disabled { background: #646464; }
.brush { background: #e4e4e4; }
.brush select { padding-left: 45px; background: linear-gradient(#000, #000) 5px 8px / 35px 2px no-repeat; }
.dark { background: linear-gradient(#5c5c5c, #505050); color: #e2e2e2; }
.spin { flex: none; width: 17px; display: flex; flex-direction: column; border-right: 1px solid #2a2a2a; background: linear-gradient(#606060, #505050); }
.spin button { flex: 1; display: grid; place-items: center; }
.spin button + button { border-top: 1px solid #2f2f2f; }
.spin button::before { content: ""; border: 3px solid transparent; border-top: 0; border-bottom: 4px solid #ddd; }
.spin button + button::before { border-bottom: 0; border-top: 4px solid #ddd; }
.linkbtn { display: grid; place-items: center; width: 24px; height: 24px; background: #303030; border: 1px solid #222; }
.linkbtn.wide { width: 22px; height: 22px; }

/* work area */
.work { flex: 1; min-height: 0; display: grid; grid-template-columns: 41px minmax(0, 1fr) 320px; }
.collapse { flex: none; height: 12px; background: linear-gradient(#2c2c2c, #363636); padding: 3px 4px; border-bottom: 1px solid #262626; }
.collapse.end { display: flex; justify-content: flex-end; padding-right: 3px; }

.tools { border-left: 1px solid #2a2a2a; border-right: 3px solid #2c2c2c; display: flex; flex-direction: column; align-items: center; }
.tools .collapse { align-self: stretch; }
.toolgrip { height: 16px; padding-top: 3px; }
.toolgrip i { width: 20px; height: 4px; background: repeating-linear-gradient(90deg, #1e1e1e 0 1px, #4a4a4a 1px 2px); }
.toolset { width: 30px; }
.toolset hr { height: 2px; background: #3a3a3a; border-bottom: 1px solid #505050; }
.tool { position: relative; width: 28px; height: 24px; margin: 0 1px; display: grid; place-items: center; }
.tool.active { background: #303030; border: 1px solid #222; }
.tool.hover { background: #6a6a6a; border: 1px solid #262626; }
.tool.more::after { content: ""; position: absolute; right: 0; bottom: 1px; border: 2px solid #ddd; border-top-color: transparent; border-left-color: transparent; }
.tool.type { font: 19px/22px "Liberation Serif", serif; color: #c8c8c8; }
.minirow { display: flex; align-items: center; justify-content: space-between; width: 30px; height: 12px; }
.tools .minirow { margin-top: 2px; }
.fillstroke { position: relative; width: 30px; height: 30px; }
.sw.big { position: absolute; width: 19px; height: 19px; left: 0; top: 0; border: 2px solid #fff; }
.sw.none.big { left: 11px; top: 11px; }
.sw.none.big::after { content: ""; position: absolute; inset: 4px; border: 1px solid #333; }
.chip .sw.none::after { content: ""; position: absolute; inset: 5px; border: 1px solid #333; }
.tools .fillstroke { margin: 7px 0 5px; }
.modes { display: flex; border: 1px solid #222; gap: 1px; background: #222; margin-bottom: 1px; }
.modes i { width: 8px; height: 8px; }
.grad { background: linear-gradient(90deg, #fff, #333); }

.doc { display: flex; flex-direction: column; min-width: 0; }
.doctabs { flex: none; height: 19px; background: linear-gradient(#303030, #363636); display: flex; }
.doctab { display: flex; align-items: center; gap: 17px; width: 288px; padding-left: 10px; background: #4a4a4a; border-right: 1px solid #262626; font: bold 11px/16px "Liberation Sans", sans-serif; white-space: nowrap; }
.stage { flex: 1; min-height: 0; display: grid; grid-template: 17px minmax(0, 1fr) / 17px minmax(0, 1fr) 17px; }
.rule-x { grid-area: 1 / 1 / 2 / 3; width: 100%; height: 17px; background: #2a2a2a; }
.rule-y { grid-area: 2 / 1 / 3 / 2; width: 17px; height: 100%; background: #2a2a2a; }
.rule-x text, .rule-y text { font: 9px "DejaVu Sans Condensed", sans-serif; fill: #b0b0b0; }
.rule-x path, .rule-y path { stroke: #7c7c7c; }
.canvas { position: relative; overflow: hidden; background: #5e5e5e; }
.artboard { position: absolute; left: 515px; top: 6px; width: 646px; height: 911px; background: #5c9ec9; border: 2px solid #4f7df0; }
.h { position: absolute; width: 6px; height: 6px; background: #fff; border: 1px solid #4f7df0; margin: -4px; z-index: 2; }
.tl, .ml, .bl { left: 0; } .tr, .mr, .br { right: 0; } .tl, .tc, .tr { top: 0; } .bl, .bc, .br { bottom: 0; } .tc, .bc { left: 50%; } .ml, .mr { top: 50%; }
.guide { position: absolute; background: #4ffcff; }
.gx1, .gx2 { width: 1px; top: 0; bottom: 0; }
.gx1 { left: 517px; } .gx2 { left: 1157px; }
.gy1, .gy2 { height: 1px; left: 0; right: 0; }
.gy1 { top: 8px; } .gy2 { top: 914px; }
.vscroll { grid-area: 1 / 3 / 3 / 4; position: relative; display: flex; flex-direction: column; justify-content: space-between; align-items: center; padding: 6px 0; background: #363636; border: 1px solid #262626; border-bottom: 0; }
.vscroll .up { border: 4px solid transparent; border-top: 0; border-bottom: 6px solid #ddd; }
.vscroll .down { border: 4px solid transparent; border-bottom: 0; border-top: 6px solid #ddd; }
.thumb { width: 15px; height: 15px; background: #909090; }

/* floating transform panel */
.transform { position: absolute; left: 700px; top: 415px; width: 232px; background: #4a4a4a; border: 1px solid #262626; border-radius: 4px 4px 0 0; box-shadow: 0 1px 3px rgba(0, 0, 0, .4); }
.thead { height: 13px; display: flex; align-items: center; justify-content: flex-end; gap: 10px; padding-right: 5px; background: #323232; border-radius: 4px 4px 0 0; }
.tabs { flex: none; height: 17px; display: flex; align-items: center; background: linear-gradient(#2c2c2c, #363636); border-bottom: 1px solid #555; padding-right: 5px; }
.tab { align-self: stretch; display: flex; align-items: center; gap: 3px; margin-bottom: -1px; padding: 0 7px; border-right: 1px solid #262626; color: #8e8e8e; font: bold 10px/16px Roboto, "Liberation Sans", sans-serif; white-space: nowrap; }
.tab.on { background: #4a4a4a; color: #e2e2e2; }
.tab.on:has(svg) { padding: 0 7px 0 4px; }
.tab.clip { width: 49px; padding: 0 0 0 6px; overflow: hidden; background: #3c3c3c; }
.tbody { padding: 7px 5px; }
.tgrid { display: grid; grid-template-columns: 20px 27px 57px 22px 57px 29px; grid-auto-rows: 19px; gap: 7px 0; align-items: center; }
.tgrid label { display: flex; justify-content: flex-end; align-items: center; gap: 1px; padding-right: 6px; }
.tgrid .rot { grid-column: 2; }
.tref { grid-area: 1 / 1 / 3 / 2; }
.tlink { grid-area: 1 / 6 / 3 / 7; justify-self: end; }
.angle { width: 55px; justify-self: start; }
.tbody hr { margin: 6px 0 5px; }
.check { display: flex; align-items: center; gap: 5px; height: 14px; margin-bottom: 6px; padding-left: 1px; white-space: nowrap; }
.check:last-child { margin-bottom: 0; }
.check input { appearance: none; position: relative; width: 11px; height: 11px; background: #5a5a5a; border: 1px solid #2a2a2a; }
.check input:checked::after { content: ""; position: absolute; left: 2px; top: -2px; width: 3px; height: 7px; border: solid #eee; border-width: 0 2px 2px 0; rotate: 40deg; }

/* status bar */
.status { flex: none; height: 16px; display: flex; align-items: center; background: #4a4a4a; border-top: 1px solid #2a2a2a; padding-left: 8px; }
.status > .plain + .plain { margin: 0 11px; }
.status .field { height: 15px; border-width: 0 1px; }
.nav { width: 44px; display: grid; place-items: center; }
.tooltext { width: 200px; align-self: stretch; text-align: center; border: solid #363636; border-width: 0 1px; }
.go { width: 19px; }
.triR { border: 4px solid transparent; border-left: 6px solid #ddd; border-right: 0; }
.hscroll { flex: 1; align-self: stretch; display: flex; align-items: center; padding: 0 6px 0 4px; background: #363636; }
.hscroll .left { border: 4px solid transparent; border-right: 6px solid #ddd; border-left: 0; }
.hscroll .rightEnd { border: 4px solid transparent; border-left: 6px solid #ddd; border-right: 0; }
.before { flex: 49; } .after { flex: 51; }
.corner { width: 17px; }

/* dock */
.dock { display: flex; flex-direction: column; border-left: 2px solid #262626; min-height: 0; }
.panel { flex: none; border-bottom: 2px solid #262626; }
.panel.last { border: 0; }
.swbody { position: relative; padding: 7px 6px 0 5px; }
.swtop { display: flex; justify-content: space-between; margin-bottom: 4px; }
.views { display: flex; height: 22px; border: 1px solid #2a2a2a; }
.views button { width: 25px; display: grid; place-items: center; background: #5c5c5c; }
.views .sel { background: #333; }
.swlist { display: flex; height: 76px; border: 1px solid #2c2c2c; }
.swscroll { flex: 1; }
.swgrid { display: grid; grid-template-columns: repeat(20, 14px); grid-auto-rows: 14px; }
.swgrid.group { margin-top: 2px; }
.cell { margin: 0 1px 1px 0; }
.fold { display: grid; place-items: center; }
.chosen { background: #5c9ec9; border: 1px solid #fff; outline: 1px solid #111; outline-offset: -3px; }
.mini-scroll { width: 13px; display: flex; flex-direction: column; justify-content: space-between; align-items: center; padding: 5px 0; background: #3a3a3a; }
.mini-scroll i { border: 4px solid transparent; border-top: 0; border-bottom: 5px solid #888; }
.mini-scroll .dn { border-bottom: 0; border-top: 5px solid #888; }
.foot { display: flex; align-items: center; gap: 15px; height: 21px; padding-left: 3px; }
.dim { opacity: .35; }
.colbody { position: relative; padding: 6px 18px 8px 5px; }
.colgrid { display: flex; height: 100px; gap: 15px; }
.colleft { width: 30px; }
.colleft .fillstroke { margin: 7px 0 13px; }
.cube { padding-left: 5px; width: 38px; height: 14px; }
.gamut { width: 14px; height: 14px; background: #4b93d2; border: 1px solid #fff; }
.sliders { flex: 1; }
.slider { height: 25px; display: grid; grid-template-columns: 21px 108px 34px auto; align-items: center; }
.slider label { padding-left: 2px; }
.slider input[type=range] { appearance: none; width: 111px; height: 16px; margin-left: -4px; background: var(--track) 50% 50% / calc(100% - 8px) 4px no-repeat; }
.slider input[type=range]::-webkit-slider-thumb { appearance: none; width: 9px; height: 7px; margin-top: 10px; background: #c4c4c4; clip-path: polygon(50% 0, 100% 55%, 100% 100%, 0 100%, 0 55%); }
.slider .pc { padding-left: 3px; font-size: 11px; }
.three { display: flex; gap: 1px; width: 40px; margin: 8px 0 10px; border: 1px solid #222; background: #222; }
.three i { flex: 1; height: 12px; }
.blk { background: #000; } .wht { background: #fff; }
.spectrum { height: 22px; border: 1px solid #222; background: linear-gradient(rgba(255,255,255,.95), rgba(255,255,255,0) 45%, rgba(0,0,0,0) 55%, rgba(0,0,0,.95)), linear-gradient(90deg, #e2001a 0, #f39a00 8%, #ffed00 16%, #7ab51d 28%, #5fae1c 38%, #36a9c0 48%, #4fb4e8 54%, #2d4b9b 64%, #6b3a8f 76%, #c4178a 88%, #e2001a 98%); }
.pgrip { position: absolute; right: 1px; bottom: 2px; }
.apbody { padding: 6px 6px 0 5px; }
.apbody .foot { padding-left: 7px; }
.aplist { height: 268px; border: 1px solid #2c2c2c; }
.aprow { display: flex; align-items: center; height: 25px; border-bottom: 1px solid #303030; }
.aprow.sub { background: #585858; }
.aprow .tri { margin: 0 10px 0 4px; }
.eye { width: 25px; align-self: stretch; display: grid; place-items: center; border-right: 1px solid #303030; }
.eye.dim { opacity: 1; } .eye.dim svg { opacity: .3; }
.sw.mid { width: 19px; height: 19px; margin: 0 26px 0 3px; border: 2px solid #fff; outline: 1px solid #222; }
.c1 { width: 78px; } .c2 { margin-left: 42px; width: 77px; } .c3 { margin-left: 22px; width: 77px; }
.framed { width: 15px; height: 15px; border: 1px solid #222; outline: 2px solid #eee; box-shadow: inset 0 0 0 1px #fff; }
.fx { font: italic 14px/16px "Liberation Serif", serif; color: #c4c4c4; }
.footend { width: 7px; }
.chbody { width: 224px; display: flex; flex-direction: column; gap: 7px; padding: 7px 0 7px 6px; }
.chbody hr { margin-bottom: -1px; }
.touch { width: 187px; height: 24px; border: 1px solid #2a2a2a; background: linear-gradient(#5c5c5c, #505050); display: flex; align-items: center; justify-content: center; gap: 7px; }
.chbody .arrow { width: 16px; }
.font { align-items: center; padding-left: 2px; }
.font .arrow { align-self: stretch; }
.chrow { display: grid; grid-template-columns: 21px 80px 16px 21px 80px; align-items: center; }
.chrow > :nth-child(3) { grid-column: 4; justify-self: start; }
.styles { height: 11px; display: flex; align-items: center; gap: 14px; padding-left: 3px; font: 14px/11px "Liberation Serif", serif; color: #c4c4c4; }
.styles button { width: 18px; line-height: 11px; white-space: nowrap; }
.styles button:nth-child(3) { margin-left: 20px; }
.styles button:nth-child(5) { margin-left: 18px; }
.styles small, .styles sup, .styles sub, .aa sub { font-size: 10px; line-height: 0; }
.styles .u { text-decoration: underline; } .styles .s { text-decoration: line-through; }
.chlast { display: grid; grid-template-columns: 101px 37px 80px; }
.chlast select { padding-left: 6px; }
.aa { padding-left: 14px; font: 13px/17px "DejaVu Sans Condensed", sans-serif; color: #b8b8b8; }

.tooltip { position: absolute; left: 13px; top: 290px; height: 20px; padding: 0 6px; border: 1px solid #767676; border-radius: 2px; background: linear-gradient(#fff, #e4e5f0); color: #575757; font: 11px/18px Inter, "Open Sans", sans-serif; box-shadow: 3px 3px 3px rgba(0, 0, 0, .5); }
```
FILE: app.js
```js
// Rulers: 50 mm take 53.9 px at 38 % zoom.
const STEP = 53.9;
function rulerX(svg, origin, width) {
  let ticks = '', text = '';
  for (let mm = -500; mm * STEP / 50 + origin < width; mm += 10) {
    const x = Math.round(origin + mm * STEP / 50) + 0.5;
    if (x < 17) continue;
    const major = mm % 50 === 0;
    ticks += `M${x} ${major ? 1 : 13}V17`;
    if (major) text += `<text x="${x + 2}" y="11">${Math.abs(mm)}</text>`;
  }
  svg.innerHTML = `<path d="${ticks}"/>${text}`;
}
function rulerY(svg, origin, height) {
  let ticks = '', text = '';
  for (let mm = 0; mm * STEP / 50 + origin < height + 20; mm += 10) {
    const y = Math.round(origin + mm * STEP / 50) + 0.5;
    const major = mm % 50 === 0;
    ticks += `M${major ? 1 : 13} ${y}H17`;
    if (major && mm) {
      const digits = String(mm).split('');
      digits.forEach((d, i) => { text += `<text x="2" y="${y - 5 - (digits.length - 1 - i) * 10}">${d}</text>`; });
    }
  }
  svg.innerHTML = `<path d="${ticks}"/>${text}`;
}
function drawRulers() {
  const x = document.getElementById('rule-x'), y = document.getElementById('rule-y');
  rulerX(x, 532, x.getBoundingClientRect().width);
  rulerY(y, 6, y.getBoundingClientRect().height);
}
drawRulers();
addEventListener('resize', drawRulers);

// Swatch library
const swatches = [
  'NONE', 'REG', '#fff', '#000', '#58595b', '#808285', '#abadb0', '#d4d6d8',
  '#d4001f', '#dc5f42', '#e99878', '#f5cdb5', '#45a326', '#82bb62', '#b1d396', '#dae9cb', '#0064b4', '#5082c4', '#93aad8', '#c9d4ee',
  '#ea9400', '#eeaf4b', '#f4c988', '#fae5c6', '#8c2a88', '#a562a2', '#be94c2', '#decbe2', '#22abe6', '#72c0ee', '#a9d8f6', '#d4ebfb',
  '#fff000', '#fff24d', '#fff68f', '#fffbc9', 'linear-gradient(90deg,#fff,#444)', 'radial-gradient(circle,#fff,#000 70%)',
  'linear-gradient(90deg,#8a4a34,#fff 35%,#8a4a34 60%,#f0d0b8)', 'linear-gradient(90deg,#d4001f,#ffe800 25%,#36a026 45%,#0a6fd0 65%,#7a1c90 85%)',
  'radial-gradient(circle,#111 0 2px,#2c6fc0 3px 4px,#fff 6px)', 'linear-gradient(90deg,#22abe6,#a9d8f6 35%,#f4a060 60%,#f6d02c)',
  'linear-gradient(#26307c,#26307c) 50% 50%/4px 4px no-repeat,radial-gradient(circle,#fff 6px,#26307c 8px)', 'conic-gradient(#ddd 0 12%,#888 12% 38%,#556 38% 62%,#999 62% 88%,#ddd 88%)',
  'repeating-linear-gradient(60deg,#fff 0 2px,#b09030 2px 3px)', 'linear-gradient(#fff 2px,#3a9a2c 2px 4px,#c0da60 4px 8px,#3a9a2c 8px 10px,#fff 10px)',
  'radial-gradient(circle,#fff 0 1px,#3c48a0 2px 2px,#fff 3px) 0 0/6px 6px', 'linear-gradient(90deg,#7a7a10,#c8b420 30%,#2c7c2c 55%,#8aa820 80%,#2c7c2c)'
];
document.getElementById('swatches').innerHTML = swatches.map(s => {
  if (s === 'NONE') return '<i class="cell none"></i>';
  if (s === 'REG') return '<i class="cell wht"><svg width="13" height="13"><path d="M6.500 0v13M0 6.500h13" stroke="#222"/><circle cx="6.500" cy="6.500" r="4.500" fill="none" stroke="#222"/><circle cx="6.500" cy="6.500" r="2" fill="none" stroke="#222"/></svg></i>';
  return `<i class="cell" style="background:${s}"></i>`;
}).join('');

// CMYK sliders
const channels = [
  ['C', 70, '#fbd9cf,#0098d0 75%,#0086c8'], ['M', 20, '#28b4e0,#4c7fb8 50%,#6a2080'],
  ['Y', 10, '#3c9ad8,#5a9a28'], ['K', 0, '#4aa4cc,#0a1620']
];
document.getElementById('sliders').innerHTML = channels.map(([n, v, g]) => `
  <div class="slider"><label for="s-${n}">${n}</label>
  <input type="range" id="s-${n}" min="0" max="100" value="${v}" style="--track:linear-gradient(90deg,${g})">
  <span class="field"><input aria-label="${n}-Wert" value="${v}"></span><span class="pc">%</span></div>`).join('');
```
